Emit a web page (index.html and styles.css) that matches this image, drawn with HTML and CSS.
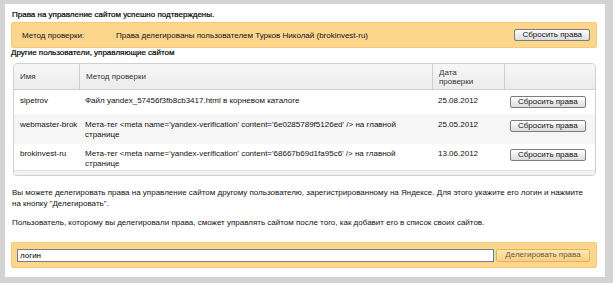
FILE: index.html
```html
<!DOCTYPE html>
<html lang="ru">
<head>
    <meta charset="UTF-8">
    <title>Права на управление сайтом</title>
    <link rel="stylesheet" href="styles.css">
</head>
<body>
    <div class="panel">
        <div class="title">Права на управление сайтом успешно подтверждены.</div>
        <div class="notice">
            <span class="notice-label">Метод проверки:</span>
            <span class="notice-text">Права делегированы пользователем Турков Николай (brokinvest-ru)</span>
            <button class="btn">Сбросить права</button>
        </div>
        <div class="subtitle">Другие пользователи, управляющие сайтом</div>
        <table class="users">
            <thead>
                <tr>
                    <th class="col-name">Имя</th>
                    <th class="col-method">Метод проверки</th>
                    <th class="col-date">Дата<br>проверки</th>
                    <th class="col-btn"></th>
                </tr>
            </thead>
            <tbody>
                <tr>
                    <td>sipetrov</td>
                    <td>Файл yandex_57456f3fb8cb3417.html в корневом каталоге</td>
                    <td>25.08.2012</td>
                    <td><button class="btn">Сбросить права</button></td>
                </tr>
                <tr class="odd">
                    <td>webmaster-brok</td>
                    <td>Мета-тег &lt;meta name='yandex-verification' content='6e0285789f5126ed' /&gt; на главной странице</td>
                    <td>25.05.2012</td>
                    <td><button class="btn">Сбросить права</button></td>
                </tr>
                <tr>
                    <td>brokinvest-ru</td>
                    <td>Мета-тег &lt;meta name='yandex-verification' content='68667b69d1fa95c6' /&gt; на главной странице</td>
                    <td>13.06.2012</td>
                    <td><button class="btn">Сбросить права</button></td>
                </tr>
            </tbody>
            <tfoot>
                <tr><td colspan="4"></td></tr>
            </tfoot>
        </table>
        <p class="text">Вы можете делегировать права на управление сайтом другому пользователю, зарегистрированному на Яндексе. Для этого укажите его логин и нажмите на кнопку "Делегировать".</p>
        <p class="text">Пользователь, которому вы делегировали права, сможет управлять сайтом после того, как добавит его в список своих сайтов.</p>
        <div class="delegate">
            <input class="login" type="text" value="логин">
            <button class="btn btn-orange">Делегировать права</button>
        </div>
    </div>
</body>
</html>
```

FILE: styles.css
```css
body {
    margin: 0;
    background: #d3d3d3;
    font-family: "Liberation Sans", Arial, sans-serif;
    font-size: 8px;
    color: #111;
}

.panel {
    margin: 4px 8px 0 5px;
    height: 273px;
    background: #fff;
    padding: 6px 8px 0 6px;
    box-sizing: border-box;
}

.title {
    color: #000;
    line-height: 10px;
    margin-left: 1px;
    -webkit-text-stroke: 0.2px #000;
}

.notice {
    display: flex;
    align-items: center;
    height: 26px;
    box-sizing: border-box;
    margin-top: 2px;
    padding: 0 6px 0 10px;
    background: #fdd68e;
    border: 1px solid #f6c97a;
    border-radius: 2px;
}

.notice-label {
    width: 94px;
}

.notice-text {
    flex: 1;
}

.btn {
    font-family: "Liberation Sans", Arial, sans-serif;
    font-size: 8px;
    color: #111;
    height: 12px;
    padding: 0 7px;
    border: 1px solid #7c7c7c;
    border-radius: 2px;
    background: linear-gradient(#fefefe, #dcdcdc);
    line-height: 10px;
}

.subtitle {
    color: #000;
    line-height: 10px;
    margin-top: 0;
    -webkit-text-stroke: 0.2px #000;
}

.users {
    width: 583px;
    margin: 5px 0 0 2px;
    border-collapse: separate;
    border-spacing: 0;
    border: 1px solid #d0d0d0;
    border-radius: 4px;
}

.users th {
    height: 25px;
    text-align: left;
    font-weight: normal;
    color: #333;
    background: linear-gradient(#f7f7f7, #ececec);
    border-bottom: 1px solid #cfcfcf;
    border-left: 1px solid #cfcfcf;
    padding: 0 6px;
    line-height: 9px;
}

.users th:first-child {
    border-left: none;
    border-top-left-radius: 4px;
}

.users th:last-child {
    border-top-right-radius: 4px;
}

.col-name {
    width: 53px;
}

.col-date {
    width: 59px;
}

.col-btn {
    width: 78px;
}

.users td {
    vertical-align: top;
    padding: 6px 6px 4px;
    line-height: 10px;
}

.users tbody tr:first-child td {
    padding-bottom: 6px;
}

.users tbody tr:last-child td {
    padding-top: 5px;
    padding-bottom: 1px;
}

.users tr.odd td {
    background: #f6f6f6;
}

.users tbody td:first-child {
    white-space: nowrap;
    overflow: hidden;
    max-width: 53px;
}

.users tfoot td {
    height: 4px;
    padding: 0;
    background: #f2f2f2;
    border-top: 1px solid #e2e2e2;
    border-radius: 0 0 4px 4px;
}

.text {
    margin: 11px 10px 0 1px;
    line-height: 11px;
}

.text + .text {
    margin-top: 8px;
}

.delegate {
    display: flex;
    align-items: center;
    gap: 2px;
    height: 26px;
    box-sizing: border-box;
    margin-top: 14px;
    padding: 0 6px 0 5px;
    background: #fdd68e;
    border: 1px solid #f6c97a;
    border-radius: 2px;
}

.login {
    flex: 1;
    height: 13px;
    box-sizing: border-box;
    padding: 0 2px;
    font-family: "Liberation Sans", Arial, sans-serif;
    font-size: 8px;
    border: 1px solid #7d7d7d;
    border-right-color: #4a7fc0;
    outline: none;
}

.btn-orange {
    width: 94px;
    height: 13px;
    color: #6a5a3a;
    border: 1px solid #e2b45e;
    background: linear-gradient(#ffe7b4, #f8cf82);
}
```
